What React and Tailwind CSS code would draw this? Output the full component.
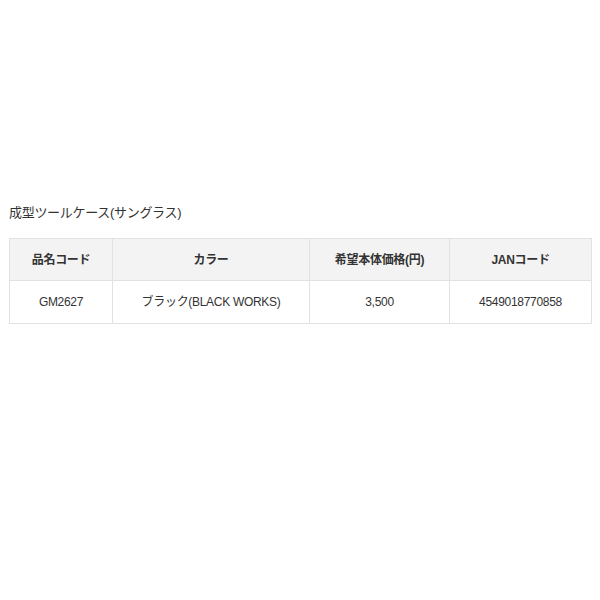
export default function App() {
  const font = { fontFamily: '"Liberation Sans", "Noto Sans CJK JP", sans-serif' };
  return (
    <div className="w-[600px] h-[600px] bg-white text-[#333]" style={font}>
      <div className="pt-[203px] px-[9px]">
        <div className="text-[13px] leading-[20px] h-[20px] tracking-[-0.3px]">成型ツールケース(サングラス)</div>
        <table className="mt-[15px] w-[582px] border-collapse table-fixed text-[12px] tracking-[-0.3px]">
          <colgroup>
            <col className="w-[103px]" />
            <col className="w-[197px]" />
            <col className="w-[140px]" />
            <col className="w-[142px]" />
          </colgroup>
          <thead>
            <tr className="bg-[#f3f3f3] h-[42px]">
              <th className="border border-[#e2e2e2] font-bold text-center p-0">品名コード</th>
              <th className="border border-[#e2e2e2] font-bold text-center p-0">カラー</th>
              <th className="border border-[#e2e2e2] font-bold text-center p-0">希望本体価格(円)</th>
              <th className="border border-[#e2e2e2] font-bold text-center p-0">JANコード</th>
            </tr>
          </thead>
          <tbody>
            <tr className="h-[43px]">
              <td className="border border-[#e2e2e2] text-center p-0">GM2627</td>
              <td className="border border-[#e2e2e2] text-center p-0">ブラック(BLACK WORKS)</td>
              <td className="border border-[#e2e2e2] text-center p-0">3,500</td>
              <td className="border border-[#e2e2e2] text-center p-0">4549018770858</td>
            </tr>
          </tbody>
        </table>
      </div>
    </div>
  );
}
